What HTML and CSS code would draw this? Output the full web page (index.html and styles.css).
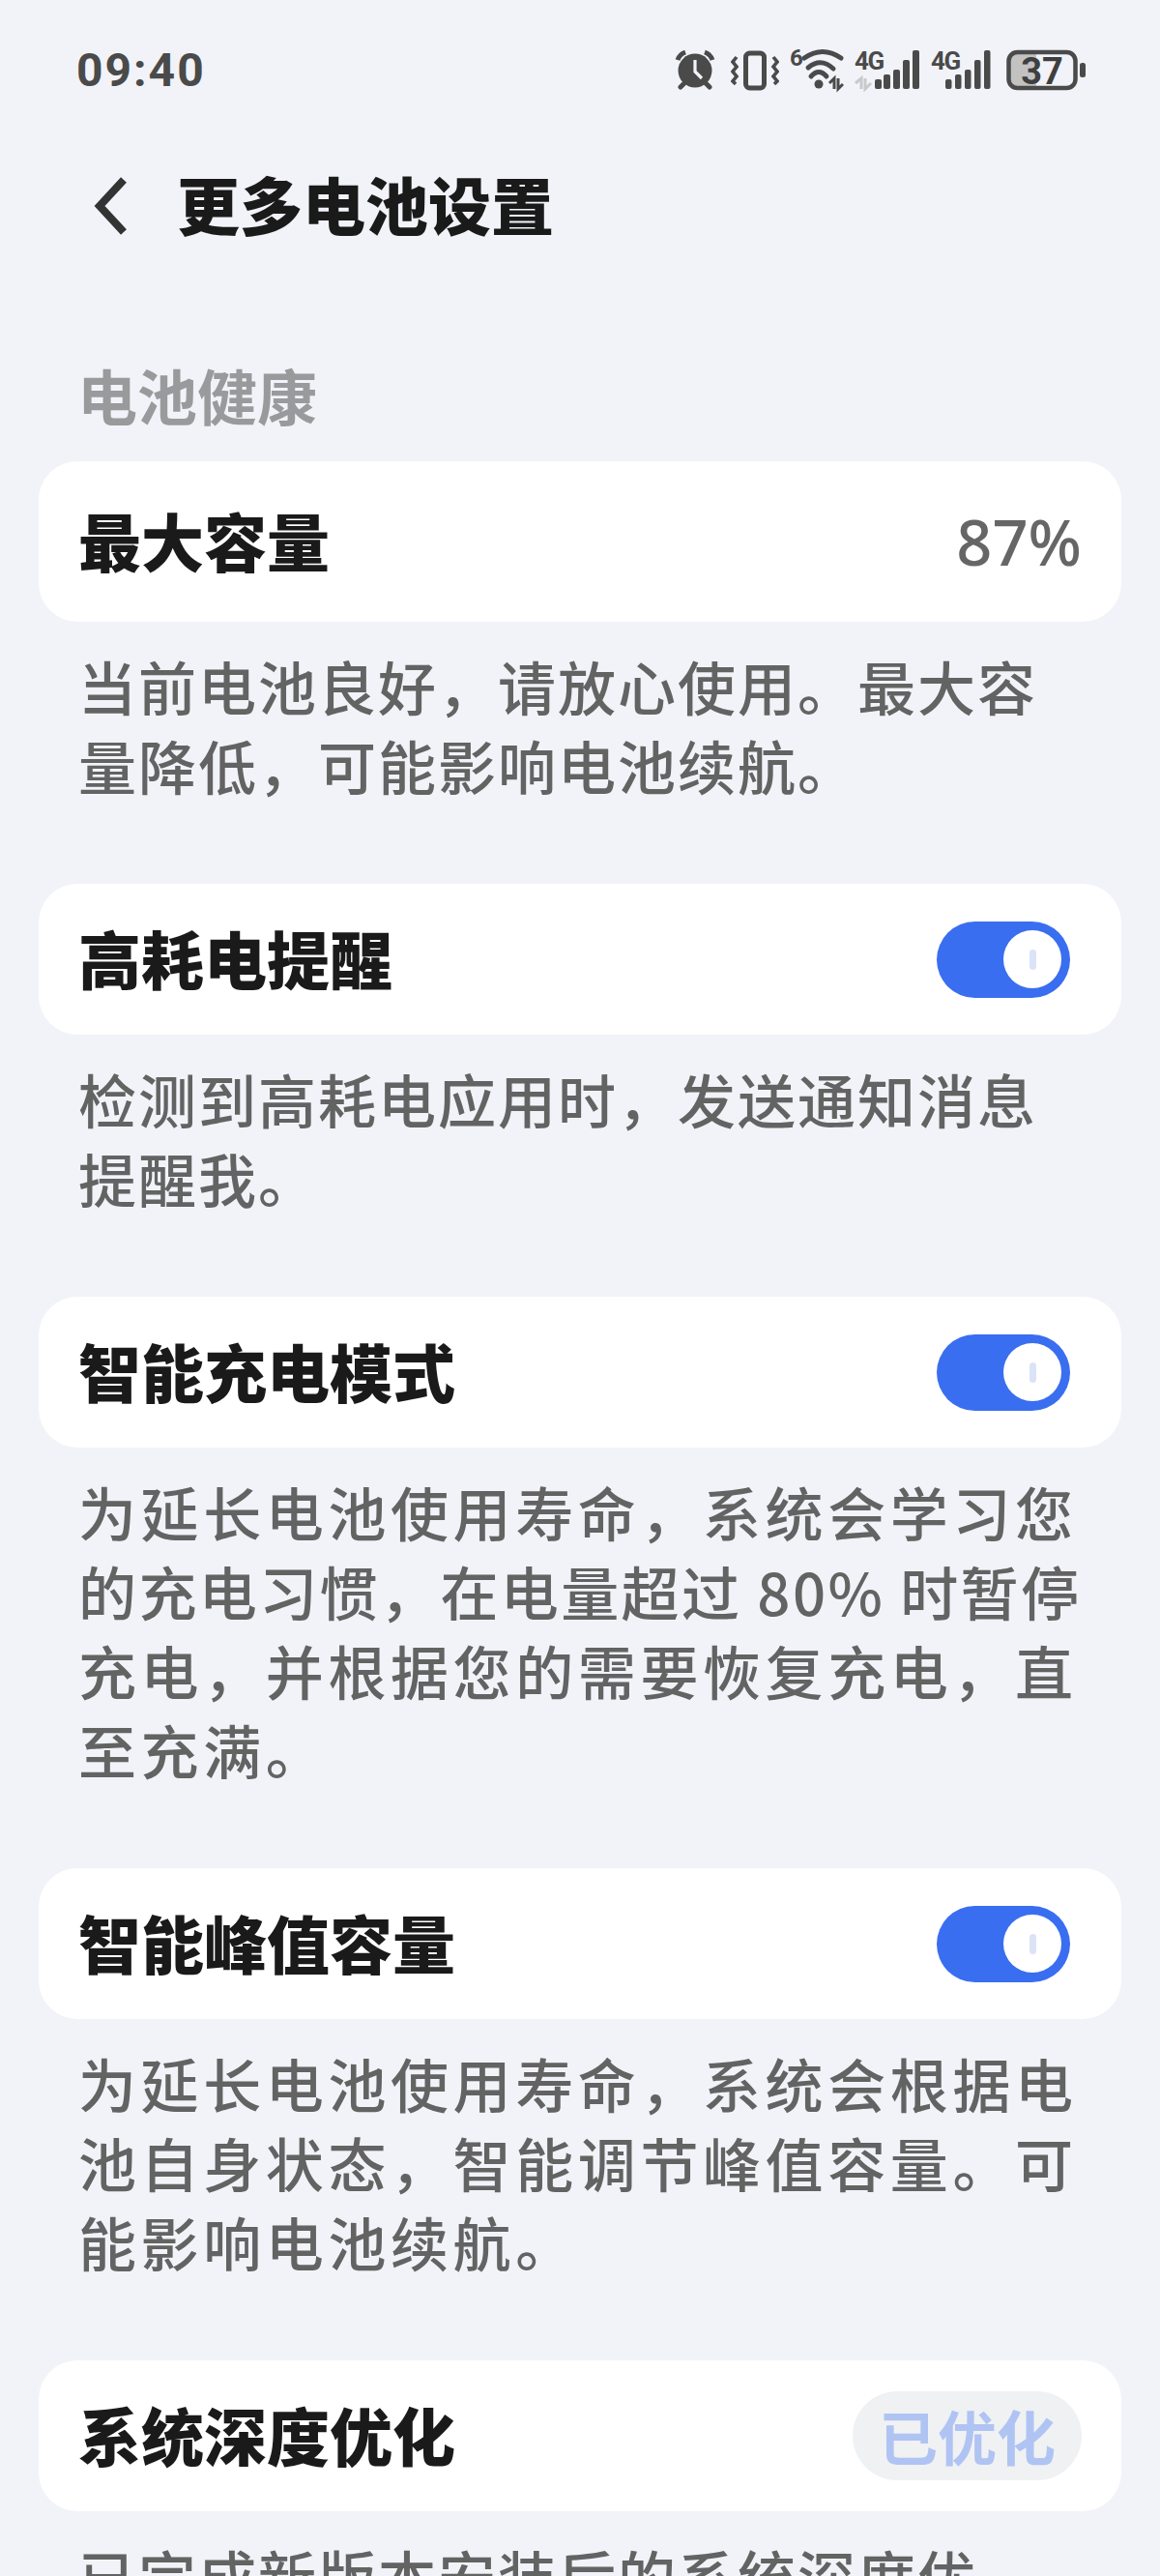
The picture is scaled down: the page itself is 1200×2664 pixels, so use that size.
FILE: index.html
```html
<!DOCTYPE html>
<html lang="zh">
<head>
    <meta charset="utf-8">
    <title>更多电池设置</title>
    <link rel="stylesheet" href="styles.css">
</head>
<body>
  <div class="status-bar">
    <span class="time">09:40</span>
    <div class="status-icons">
      <!-- alarm -->
      <svg class="icon" width="42" height="42" viewBox="0 0 42 42">
        <circle cx="21" cy="22" r="17.5" fill="#4a4a4a"/>
        <path d="M3 11 Q5 5 11 3 M31 3 Q37 5 39 11" fill="none" stroke="#4a4a4a" stroke-width="5"/>
        <path d="M6 39 L10 35 M36 39 L32 35" stroke="#4a4a4a" stroke-width="5" stroke-linecap="round"/>
        <path d="M21 11 V23 L28 30" fill="none" stroke="#f1f3f8" stroke-width="3.2"/>
      </svg>
      <!-- vibrate -->
      <svg class="icon icon-gap" width="50" height="44" viewBox="0 0 50 44">
        <rect x="15.500" y="5" width="19" height="36" rx="4" fill="none" stroke="#4a4a4a" stroke-width="5"/>
        <path d="M6 9 L2 14 L6 19 L2 24 L6 29 L2 34 L5 37" fill="none" stroke="#4a4a4a" stroke-width="3.600"/>
        <path d="M44 9 L48 14 L44 19 L48 24 L44 29 L48 34 L45 37" fill="none" stroke="#4a4a4a" stroke-width="3.600"/>
      </svg>
      <!-- wifi 6 -->
      <svg class="icon" width="56" height="56" viewBox="0 -6 56 56">
        <text x="0" y="18" class="icon-label icon-label-six">6</text>
        <path d="M15 10 Q34 -3 53 10" fill="none" stroke="#4a4a4a" stroke-width="5" stroke-linecap="round"/>
        <path d="M19 20 Q32 9 45 21" fill="none" stroke="#4a4a4a" stroke-width="5" stroke-linecap="round"/>
        <path d="M22 29 Q30 20 38 29" fill="none" stroke="#4a4a4a" stroke-width="5" stroke-linecap="round"/>
        <circle cx="30" cy="37" r="4.500" fill="#4a4a4a"/>
        <path d="M41 36 L46 31 V42 M50 31 V42 L55 37" fill="none" stroke="#4a4a4a" stroke-width="3"/>
      </svg>
      <!-- 4G sim 1 -->
      <svg class="icon" width="68" height="56" viewBox="0 -6 68 56">
        <text x="0" y="22" class="icon-label">4G</text>
        <path d="M1 36 L7 31 V42 M11 31 V42 L17 36" fill="none" stroke="#c9c9cb" stroke-width="3"/>
        <rect x="21" y="32" width="7" height="10" rx="2" fill="#4a4a4a"/>
        <rect x="30" y="27" width="7" height="15" rx="2" fill="#4a4a4a"/>
        <rect x="40" y="22" width="7" height="20" rx="2" fill="#4a4a4a"/>
        <rect x="50" y="12" width="7" height="30" rx="2" fill="#4a4a4a"/>
        <rect x="60" y="2" width="7" height="40" rx="2" fill="#4a4a4a"/>
      </svg>
      <!-- 4G sim 2 -->
      <svg class="icon" width="62" height="56" viewBox="0 -6 62 56">
        <text x="0" y="22" class="icon-label">4G</text>
        <rect x="15" y="32" width="6.500" height="10" rx="2" fill="#4a4a4a"/>
        <rect x="25" y="27" width="6.500" height="15" rx="2" fill="#4a4a4a"/>
        <rect x="35" y="22" width="6.500" height="20" rx="2" fill="#4a4a4a"/>
        <rect x="45" y="12" width="6.500" height="30" rx="2" fill="#4a4a4a"/>
        <rect x="55" y="2" width="6.500" height="40" rx="2" fill="#4a4a4a"/>
      </svg>
      <!-- battery -->
      <svg class="icon icon-gap" width="82" height="48" viewBox="0 -3 82 48">
        <path d="M9 4 H31 V38 H9 Q4 38 4 33 V9 Q4 4 9 4 Z" fill="#c2c2c3"/>
        <rect x="2.500" y="3" width="69" height="37" rx="9" fill="none" stroke="#4a4a4a" stroke-width="4.500"/>
        <rect x="76" y="14" width="6" height="15" rx="2.500" fill="#4a4a4a"/>
        <text x="37" y="36" text-anchor="middle" class="battery-text">37</text>
      </svg>
    </div>
  </div>

  <div class="title-row">
    <svg class="back" width="36" height="62" viewBox="0 0 36 62">
      <path d="M31 4 L6 31 L31 58" fill="none" stroke="#333" stroke-width="8"/>
    </svg>
    <h1 class="page-title">更多电池设置</h1>
  </div>

  <h2 class="group-title">电池健康</h2>

  <div class="setting">
    <div class="card card-tall">
      <span class="card-label">最大容量</span>
      <span class="card-value">87%</span>
    </div>
    <p class="desc">当前电池良好，请放心使用。最大容<br>量降低，可能影响电池续航。</p>
  </div>

  <div class="setting">
    <div class="card">
      <span class="card-label">高耗电提醒</span>
      <span class="toggle"><span class="knob"><span class="tick"></span></span></span>
    </div>
    <p class="desc">检测到高耗电应用时，发送通知消息<br>提醒我。</p>
  </div>

  <div class="setting">
    <div class="card">
      <span class="card-label">智能充电模式</span>
      <span class="toggle"><span class="knob"><span class="tick"></span></span></span>
    </div>
    <p class="desc desc-wide">为延长电池使用寿命，系统会学习您<br><span class="line-tight">的充电习惯，在电量超过 80% 时暂停</span><br>充电，并根据您的需要恢复充电，直<br>至充满。</p>
  </div>

  <div class="setting">
    <div class="card">
      <span class="card-label">智能峰值容量</span>
      <span class="toggle"><span class="knob"><span class="tick"></span></span></span>
    </div>
    <p class="desc desc-wide">为延长电池使用寿命，系统会根据电<br>池自身状态，智能调节峰值容量。可<br>能影响电池续航。</p>
  </div>

  <div class="setting">
    <div class="card">
      <span class="card-label">系统深度优化</span>
      <span class="pill">已优化</span>
    </div>
    <p class="desc">已完成新版本安装后的系统深度优</p>
  </div>
</body>
</html>
```

FILE: styles.css
```css
html, body {
    margin: 0;
    height: 2664px;
    overflow: hidden;
}

body {
    background: #f1f3f8;
    font-family: "Noto Sans CJK SC", "Noto Sans", sans-serif;
}

.status-bar {
    height: 144px;
    display: flex;
    align-items: center;
    justify-content: space-between;
    padding: 0 77px 0 79px;
}

.time {
    font-family: Roboto, sans-serif;
    font-weight: 700;
    font-size: 48px;
    letter-spacing: 2px;
    color: #4a4a4a;
}

.status-icons {
    display: flex;
    align-items: center;
    gap: 11px;
}

.icon-gap {
    margin-left: 5px;
}

.icon-label {
    font-family: Roboto, sans-serif;
    font-weight: 700;
    font-size: 26px;
    letter-spacing: -1.500px;
    fill: #4a4a4a;
}

.icon-label-six {
    font-size: 24px;
    letter-spacing: 0;
}

.battery-text {
    font-family: Roboto, sans-serif;
    font-weight: 700;
    font-size: 38px;
    fill: #3f3f3f;
}

.title-row {
    height: 138px;
    display: flex;
    align-items: center;
    padding-left: 97px;
    gap: 50px;
}

.page-title {
    margin: 0 0 6px;
    font-size: 65px;
    font-weight: 900;
    color: #1a1a1a;
}

.group-title {
    margin: 85px 0 28px 80px;
    font-size: 62px;
    line-height: 82px;
    font-weight: 700;
    color: #999a9c;
}

.setting {
    margin: 0 40px 82px;
}

.card {
    height: 156px;
    box-sizing: border-box;
    padding: 0 41px;
    display: flex;
    align-items: center;
    justify-content: space-between;
    background: #fff;
    border-radius: 40px;
}

.card-tall {
    height: 166px;
}

.card-label {
    margin-bottom: 4px;
    font-size: 65px;
    font-weight: 900;
    color: #1a1a1a;
}

.card-value {
    font-family: "Noto Sans", sans-serif;
    font-size: 65px;
    font-weight: 500;
    color: #666;
}

.toggle {
    width: 138px;
    height: 79px;
    margin-right: 12px;
    border-radius: 40px;
    background: #3a6ef0;
    display: flex;
    align-items: center;
    justify-content: flex-end;
    padding-right: 9px;
    box-sizing: border-box;
}

.knob {
    width: 60px;
    height: 60px;
    border-radius: 50%;
    background: #fff;
    display: flex;
    align-items: center;
    justify-content: center;
}

.tick {
    width: 7px;
    height: 21px;
    border-radius: 4px;
    background: #dbe3f6;
}

.pill {
    width: 237px;
    height: 92px;
    border-radius: 46px;
    background: #f0f1f3;
    color: #b0c4f3;
    font-size: 61px;
    font-weight: 700;
    line-height: 92px;
    text-align: center;
}

.desc {
    margin: 25px 0 0;
    padding-left: 41px;
    font-size: 60px;
    line-height: 82px;
    letter-spacing: 2px;
    font-weight: 500;
    color: #636363;
    white-space: nowrap;
}

.desc-wide {
    letter-spacing: 4.600px;
}

.line-tight {
    letter-spacing: 2.400px;
}
```
